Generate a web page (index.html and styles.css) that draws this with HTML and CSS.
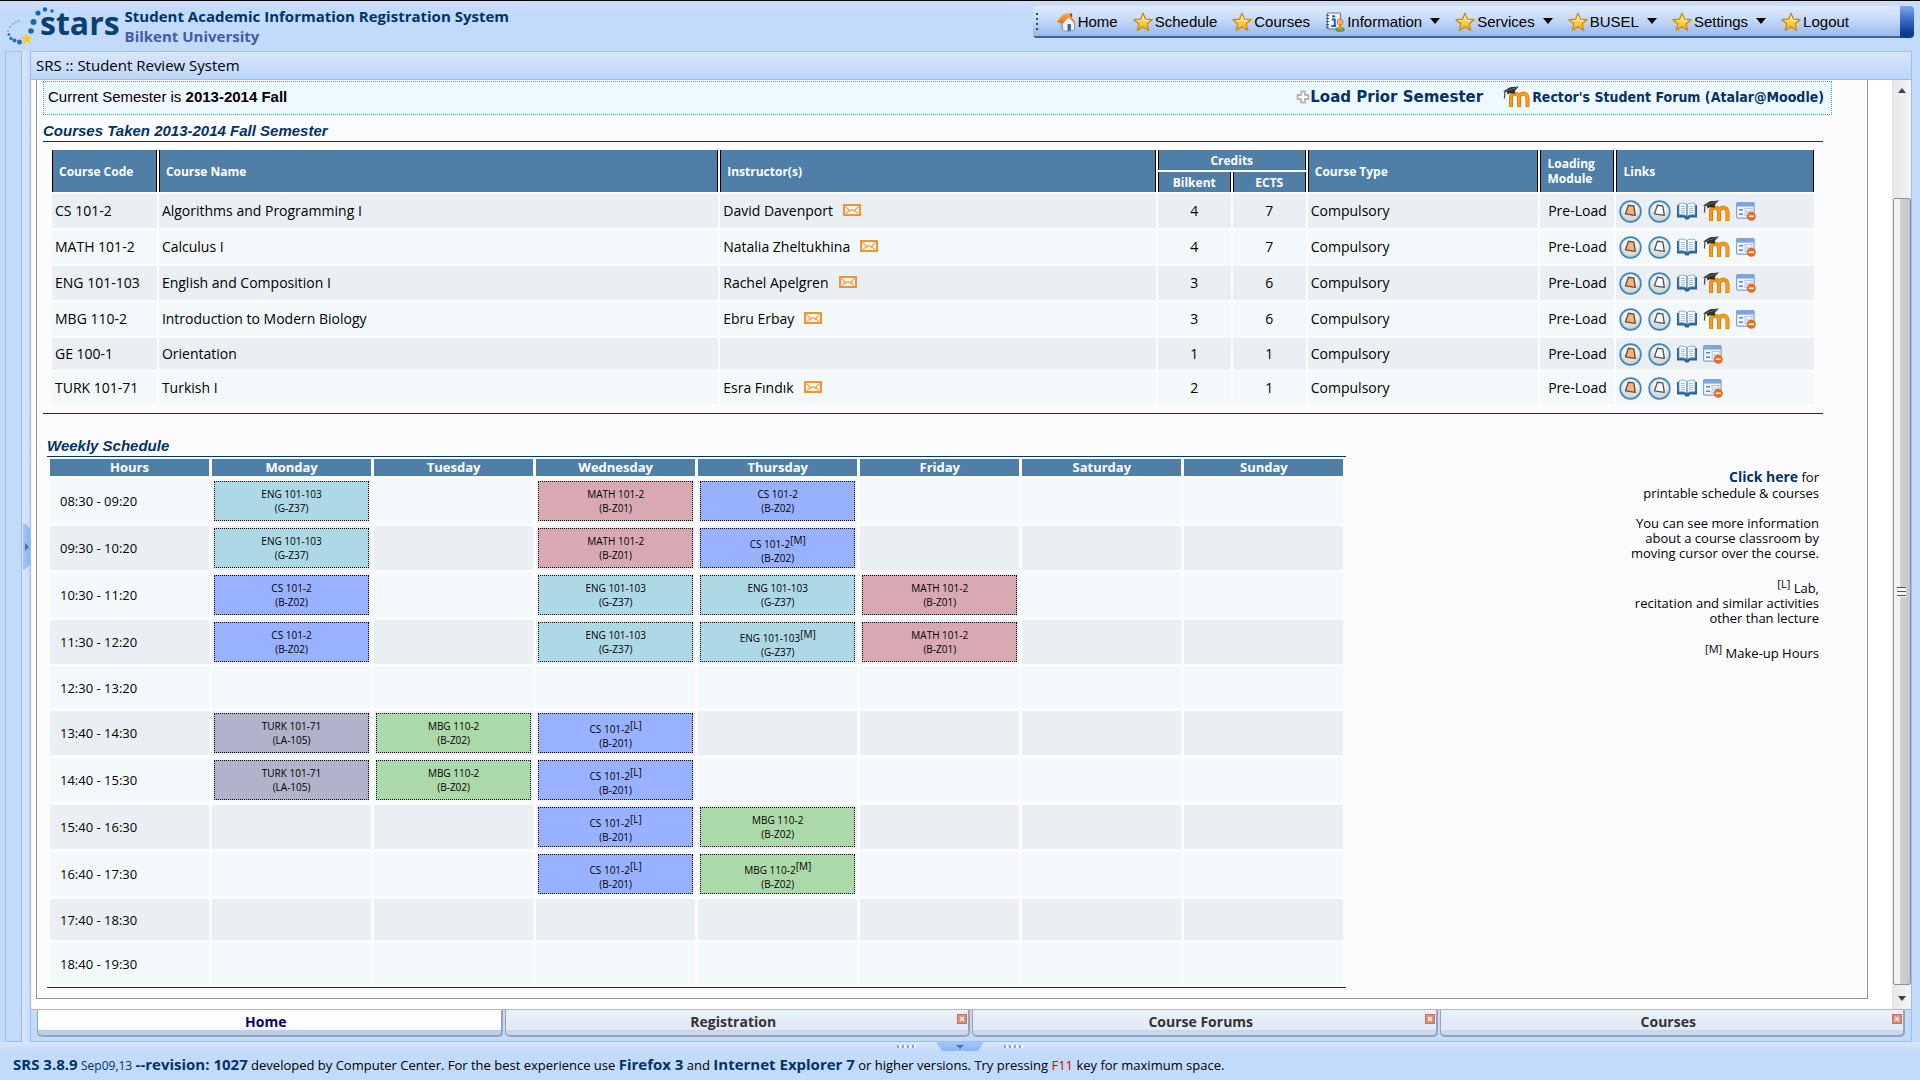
FILE: index.html
```
<!DOCTYPE html>
<html lang="en">
<head>
<meta charset="utf-8">
<meta name="viewport" content="width=device-width, initial-scale=1">
<title>SRS :: Student Review System</title>
<link rel="stylesheet" href="styles.css">
</head>
<body>
<svg class="sprite" aria-hidden="true">
  <defs>
    <linearGradient id="gold" x1="0" y1="0" x2="0" y2="1"><stop offset="0" stop-color="#fff27a"/><stop offset="1" stop-color="#f6b21b"/></linearGradient>
    <linearGradient id="disc" x1="0" y1="0" x2="0" y2="1"><stop offset="0" stop-color="#ffffff"/><stop offset="1" stop-color="#cfd3d6"/></linearGradient>
    <linearGradient id="roof" x1="0" y1="0" x2="0" y2="1"><stop offset="0" stop-color="#ffb040"/><stop offset="1" stop-color="#ee6a12"/></linearGradient>
  </defs>
  <symbol id="i-star" viewBox="0 0 20 20"><path d="M10 1.2l2.500 6 6.600.5-5 4.200 1.600 6.400L10 14.900l-5.700 3.400L5.900 11.900l-5-4.200 6.600-.5z" fill="url(#gold)" stroke="#c98a12" stroke-width="1.300" stroke-linejoin="round"/><path d="M10 4.500l1.400 3.900 3.600.4" fill="none" stroke="#fffbd0" stroke-width="1"/></symbol>
  <symbol id="i-home" viewBox="0 0 20 20"><path d="M13.500 1.500h2.600v4h-2.600z" fill="#a33a18"/><path d="M3 10l3-5 4 4v10l-6-3z" fill="#a9bcd9"/><path d="M6.500 10.500L12.500 4.500l6 6V18l-8 1.500-4-1.500z" fill="#f1f5fc" stroke="#7f96be" stroke-width="1"/><path d="M11.500 12h3.500v6.600l-3.500.6z" fill="#4468a8"/><path d="M7 2.200L12.500 1l6.900 9.300-1.400.7-5.600-6-5.400 6.600L.6 10z" fill="url(#roof)"/></symbol>
  <symbol id="i-info" viewBox="0 0 20 20"><rect x="2.500" y="1" width="13" height="16" rx="1" fill="#f4f7fc" stroke="#66789a" stroke-width="1.200"/><path d="M1 3.500h3M1 6.500h3M1 9.500h3M1 12.500h3M1 15.300h3" stroke="#47566f" stroke-width="1"/><circle cx="8.700" cy="4.300" r="1.400" fill="#1c62c0"/><path d="M6.800 7.500h3v6M6.300 14h5" fill="none" stroke="#1c62c0" stroke-width="2"/><ellipse cx="15" cy="17.500" rx="4.800" ry="2.500" fill="#46a83c"/><path d="M15 10.500l-2.600 7h5.200z" fill="#f08a26"/><circle cx="15" cy="10" r="3" fill="#f2b168" stroke="#c8741c" stroke-width=".8"/></symbol>
  <symbol id="i-bell" viewBox="0 0 24 24"><circle cx="12" cy="12" r="10.800" fill="url(#disc)" stroke="#3e86b0" stroke-width="1.700"/><circle cx="12" cy="12" r="9.500" fill="none" stroke="#a8c9dc" stroke-width=".8"/><path d="M9.800 5.500l5.600.7 1.600 9.800-10.200-1.600z" fill="#f3b577" stroke="#6b4a35" stroke-width="1.400" stroke-linejoin="round"/></symbol>
  <symbol id="i-bell-off" viewBox="0 0 24 24"><circle cx="12" cy="12" r="10.800" fill="url(#disc)" stroke="#3e86b0" stroke-width="1.700"/><circle cx="12" cy="12" r="9.500" fill="none" stroke="#a8c9dc" stroke-width=".8"/><path d="M9.800 5.500l5.600.7 1.600 9.800-10.200-1.600z" fill="#fdfdfd" stroke="#51565c" stroke-width="1.400" stroke-linejoin="round"/></symbol>
  <symbol id="i-book" viewBox="0 0 20 18"><path d="M0 3h20v12.500h-7l-1.500 2h-3l-1.500-2H0z" fill="#2c6496"/><path d="M2 1.500c3-.8 6-.4 8 1 2-1.400 5-1.800 8-1v11.500c-3-.5-6-.2-8 1.200-2-1.400-5-1.700-8-1.200z" fill="#f5fafe" stroke="#6d9cc4" stroke-width=".8"/><path d="M10 2.500v11.500" stroke="#4a7fb0" stroke-width="1.200"/><path d="M4 4.500h4M4 6.500h4M4 8.500h4M4 10.500h4M12 4.500h4M12 6.500h4M12 8.500h4M12 10.500h4" stroke="#a9bfd2" stroke-width="1"/></symbol>
  <symbol id="i-moodle" viewBox="0 0 27 22"><path d="M8 21V9M8 12c0-6 8-6 8 0v9M16 12c0-6 8.500-6 8.500 0v9" fill="none" stroke="#c77708" stroke-width="4"/><path d="M8 20.500V9M8 12c0-6 8-6 8 0v8.500M16 12c0-6 8.500-6 8.500 0v8.500" fill="none" stroke="#f89a1c" stroke-width="2.800"/><path d="M0 5.500L7 1.200 16 .4 12 4.500 11.500 8.500C9.500 6.500 6.500 7 4.500 8.500L4 6z" fill="#2e2e2e"/><path d="M2 5.500l-.6 7" stroke="#444" stroke-width="1.200"/><path d="M3 5l11-3.500" stroke="#888" stroke-width=".7"/></symbol>
  <symbol id="i-form" viewBox="0 0 20 19"><rect x=".6" y=".6" width="17.500" height="15.500" rx="1" fill="#f3f7fd" stroke="#7fa3dc" stroke-width="1.200"/><path d="M.6.600h17.500v4H.6z" fill="#7ea4e0"/><path d="M3 7.800h4M3 12.300h4" stroke="#5b84c8" stroke-width="1.600"/><rect x="9" y="6.500" width="7" height="2.600" fill="#fff" stroke="#9db6dc" stroke-width=".8"/><rect x="9" y="11" width="6" height="2.600" fill="#fff" stroke="#9db6dc" stroke-width=".8"/><circle cx="15.300" cy="14.300" r="4.500" fill="#ea6a1e"/><path d="M12.800 14.300h5" stroke="#fff" stroke-width="1.600"/></symbol>
  <symbol id="i-mail" viewBox="0 0 18 12"><rect x="1" y="1" width="16" height="10" fill="#fff6ea" stroke="#ee8a26" stroke-width="1.800"/><path d="M2.500 2.500L7 7l2-1.500L11 7l4.500-4.500M3 9.500L7 6M15 9.500L11 6" fill="none" stroke="#e6a062" stroke-width="1.100"/></symbol>
  <symbol id="i-plus" viewBox="0 0 14 14"><path d="M5 1.500h4V5h3.500v4H9v3.500H5V9H1.500V5H5z" fill="#fff" stroke="#b5b5b5" stroke-width="1.800" stroke-linejoin="round"/></symbol>
  <symbol id="i-close" viewBox="0 0 10 10"><rect x=".5" y=".5" width="9" height="9" fill="#e08a78" stroke="#c9705f"/><path d="M3 3l4 4M7 3L3 7" stroke="#fff" stroke-width="1.300"/></symbol>
</svg>

<header class="top">
  <div class="brand">
    <svg class="brand-dots" viewBox="0 0 54 42" aria-hidden="true">
      <g fill="#7aa6d3"><circle cx="2" cy="29" r="1"/><circle cx="2" cy="25" r="1"/><circle cx="4" cy="21" r="1"/><circle cx="7" cy="18" r="1"/><circle cx="10" cy="16" r="1"/><circle cx="13" cy="15" r="1"/></g>
      <g fill="#2b6db0"><circle cx="3" cy="28.500" r="1.200"/><circle cx="5" cy="32.500" r="1.700"/><circle cx="8.500" cy="34.500" r="2"/><circle cx="13.500" cy="36" r="2.500"/></g>
      <g fill="#1b69ac"><circle cx="25" cy="25" r="2.800"/><circle cx="27.500" cy="16" r="3"/><circle cx="32" cy="7" r="2.600"/><circle cx="39" cy="3.500" r="2.300"/><circle cx="46" cy="5" r="1.700"/></g>
      <path d="M20.500 27l1.800 3.700 4.200.2-3.200 2.800 1.400 4-3.900-1.900-3.600 2.400.8-4.300-3.200-2.700 4.200-.6z" fill="#fcc917"/>
    </svg>
    <span class="brand-word">stars</span>
    <div class="brand-text">
      <p class="brand-name">Student Academic Information Registration System</p>
      <p class="brand-school">Bilkent University</p>
    </div>
  </div>
  <nav class="menu">
    <a class="menu-item" href="#"><svg><use href="#i-home"/></svg>Home</a>
    <a class="menu-item" href="#"><svg><use href="#i-star"/></svg>Schedule</a>
    <a class="menu-item" href="#"><svg><use href="#i-star"/></svg>Courses</a>
    <button class="menu-item menu-drop" type="button"><svg><use href="#i-info"/></svg>Information</button>
    <button class="menu-item menu-drop" type="button"><svg><use href="#i-star"/></svg>Services</button>
    <button class="menu-item menu-drop" type="button"><svg><use href="#i-star"/></svg>BUSEL</button>
    <button class="menu-item menu-drop" type="button"><svg><use href="#i-star"/></svg>Settings</button>
    <a class="menu-item" href="#"><svg><use href="#i-star"/></svg>Logout</a>
  </nav>
</header>

<div class="frame">
  <div class="rail"></div>
  <div class="splitter"><button class="rail-handle" type="button" aria-label="Expand side panel"></button></div>
  <main class="panel">
    <h1 class="panel-title">SRS :: Student Review System</h1>
    <div class="panel-body">
      <div class="sheet">
        <div class="notice">
          <p>Current Semester is <b>2013-2014 Fall</b></p>
          <a class="notice-prior" href="#"><svg><use href="#i-plus"/></svg>Load Prior Semester</a>
          <a class="notice-forum" href="#"><svg><use href="#i-moodle"/></svg>Rector's Student Forum (Atalar@Moodle)</a>
        </div>

        <section class="courses">
          <h2 class="heading">Courses Taken 2013-2014 Fall Semester</h2>
          <table class="course-table">
            <colgroup><col class="c-code"><col class="c-name"><col class="c-inst"><col class="c-credit"><col class="c-credit"><col class="c-type"><col class="c-load"><col class="c-links"></colgroup>
            <thead>
              <tr><th rowspan="2">Course Code</th><th rowspan="2">Course Name</th><th rowspan="2">Instructor(s)</th><th class="mid" colspan="2">Credits</th><th rowspan="2">Course Type</th><th rowspan="2">Loading Module</th><th rowspan="2">Links</th></tr>
              <tr><th class="mid">Bilkent</th><th class="mid">ECTS</th></tr>
            </thead>
            <tbody>
              <tr><td>CS 101-2</td><td>Algorithms and Programming I</td><td>David Davenport<a class="mail" href="#" aria-label="Mail"><svg><use href="#i-mail"/></svg></a></td><td class="mid">4</td><td class="mid">7</td><td>Compulsory</td><td class="mid">Pre-Load</td><td><div class="links"><a href="#" aria-label="Grades"><svg class="round"><use href="#i-bell"/></svg></a><a href="#" aria-label="Attendance"><svg class="round"><use href="#i-bell-off"/></svg></a><a href="#" aria-label="Syllabus"><svg class="book"><use href="#i-book"/></svg></a><a href="#" aria-label="Moodle"><svg class="moodle"><use href="#i-moodle"/></svg></a><a href="#" aria-label="Withdraw"><svg class="form"><use href="#i-form"/></svg></a></div></td></tr>
              <tr><td>MATH 101-2</td><td>Calculus I</td><td>Natalia Zheltukhina<a class="mail" href="#" aria-label="Mail"><svg><use href="#i-mail"/></svg></a></td><td class="mid">4</td><td class="mid">7</td><td>Compulsory</td><td class="mid">Pre-Load</td><td><div class="links"><a href="#" aria-label="Grades"><svg class="round"><use href="#i-bell"/></svg></a><a href="#" aria-label="Attendance"><svg class="round"><use href="#i-bell-off"/></svg></a><a href="#" aria-label="Syllabus"><svg class="book"><use href="#i-book"/></svg></a><a href="#" aria-label="Moodle"><svg class="moodle"><use href="#i-moodle"/></svg></a><a href="#" aria-label="Withdraw"><svg class="form"><use href="#i-form"/></svg></a></div></td></tr>
              <tr><td>ENG 101-103</td><td>English and Composition I</td><td>Rachel Apelgren<a class="mail" href="#" aria-label="Mail"><svg><use href="#i-mail"/></svg></a></td><td class="mid">3</td><td class="mid">6</td><td>Compulsory</td><td class="mid">Pre-Load</td><td><div class="links"><a href="#" aria-label="Grades"><svg class="round"><use href="#i-bell"/></svg></a><a href="#" aria-label="Attendance"><svg class="round"><use href="#i-bell-off"/></svg></a><a href="#" aria-label="Syllabus"><svg class="book"><use href="#i-book"/></svg></a><a href="#" aria-label="Moodle"><svg class="moodle"><use href="#i-moodle"/></svg></a><a href="#" aria-label="Withdraw"><svg class="form"><use href="#i-form"/></svg></a></div></td></tr>
              <tr><td>MBG 110-2</td><td>Introduction to Modern Biology</td><td>Ebru Erbay<a class="mail" href="#" aria-label="Mail"><svg><use href="#i-mail"/></svg></a></td><td class="mid">3</td><td class="mid">6</td><td>Compulsory</td><td class="mid">Pre-Load</td><td><div class="links"><a href="#" aria-label="Grades"><svg class="round"><use href="#i-bell"/></svg></a><a href="#" aria-label="Attendance"><svg class="round"><use href="#i-bell-off"/></svg></a><a href="#" aria-label="Syllabus"><svg class="book"><use href="#i-book"/></svg></a><a href="#" aria-label="Moodle"><svg class="moodle"><use href="#i-moodle"/></svg></a><a href="#" aria-label="Withdraw"><svg class="form"><use href="#i-form"/></svg></a></div></td></tr>
              <tr class="short"><td>GE 100-1</td><td>Orientation</td><td></td><td class="mid">1</td><td class="mid">1</td><td>Compulsory</td><td class="mid">Pre-Load</td><td><div class="links"><a href="#" aria-label="Grades"><svg class="round"><use href="#i-bell"/></svg></a><a href="#" aria-label="Attendance"><svg class="round"><use href="#i-bell-off"/></svg></a><a href="#" aria-label="Syllabus"><svg class="book"><use href="#i-book"/></svg></a><a href="#" aria-label="Withdraw"><svg class="form"><use href="#i-form"/></svg></a></div></td></tr>
              <tr class="short"><td>TURK 101-71</td><td>Turkish I</td><td>Esra Fındık<a class="mail" href="#" aria-label="Mail"><svg><use href="#i-mail"/></svg></a></td><td class="mid">2</td><td class="mid">1</td><td>Compulsory</td><td class="mid">Pre-Load</td><td><div class="links"><a href="#" aria-label="Grades"><svg class="round"><use href="#i-bell"/></svg></a><a href="#" aria-label="Attendance"><svg class="round"><use href="#i-bell-off"/></svg></a><a href="#" aria-label="Syllabus"><svg class="book"><use href="#i-book"/></svg></a><a href="#" aria-label="Withdraw"><svg class="form"><use href="#i-form"/></svg></a></div></td></tr>
            </tbody>
          </table>
        </section>

        <div class="lower">
          <section class="schedule">
            <h2 class="heading">Weekly Schedule</h2>
            <table class="week">
              <thead>
                <tr><th>Hours</th><th>Monday</th><th>Tuesday</th><th>Wednesday</th><th>Thursday</th><th>Friday</th><th>Saturday</th><th>Sunday</th></tr>
              </thead>
              <tbody>
                <tr><th scope="row">08:30 - 09:20</th><td><div class="slot eng">ENG 101-103<br>(G-Z37)</div></td><td></td><td><div class="slot math">MATH 101-2<br>(B-Z01)</div></td><td><div class="slot cs">CS 101-2<br>(B-Z02)</div></td><td></td><td></td><td></td></tr>
                <tr><th scope="row">09:30 - 10:20</th><td><div class="slot eng">ENG 101-103<br>(G-Z37)</div></td><td></td><td><div class="slot math">MATH 101-2<br>(B-Z01)</div></td><td><div class="slot cs">CS 101-2<sup>[M]</sup><br>(B-Z02)</div></td><td></td><td></td><td></td></tr>
                <tr><th scope="row">10:30 - 11:20</th><td><div class="slot cs">CS 101-2<br>(B-Z02)</div></td><td></td><td><div class="slot eng">ENG 101-103<br>(G-Z37)</div></td><td><div class="slot eng">ENG 101-103<br>(G-Z37)</div></td><td><div class="slot math">MATH 101-2<br>(B-Z01)</div></td><td></td><td></td></tr>
                <tr><th scope="row">11:30 - 12:20</th><td><div class="slot cs">CS 101-2<br>(B-Z02)</div></td><td></td><td><div class="slot eng">ENG 101-103<br>(G-Z37)</div></td><td><div class="slot eng">ENG 101-103<sup>[M]</sup><br>(G-Z37)</div></td><td><div class="slot math">MATH 101-2<br>(B-Z01)</div></td><td></td><td></td></tr>
                <tr><th scope="row">12:30 - 13:20</th><td></td><td></td><td></td><td></td><td></td><td></td><td></td></tr>
                <tr><th scope="row">13:40 - 14:30</th><td><div class="slot turk">TURK 101-71<br>(LA-105)</div></td><td><div class="slot mbg">MBG 110-2<br>(B-Z02)</div></td><td><div class="slot cs">CS 101-2<sup>[L]</sup><br>(B-201)</div></td><td></td><td></td><td></td><td></td></tr>
                <tr><th scope="row">14:40 - 15:30</th><td><div class="slot turk">TURK 101-71<br>(LA-105)</div></td><td><div class="slot mbg">MBG 110-2<br>(B-Z02)</div></td><td><div class="slot cs">CS 101-2<sup>[L]</sup><br>(B-201)</div></td><td></td><td></td><td></td><td></td></tr>
                <tr><th scope="row">15:40 - 16:30</th><td></td><td></td><td><div class="slot cs">CS 101-2<sup>[L]</sup><br>(B-201)</div></td><td><div class="slot mbg">MBG 110-2<br>(B-Z02)</div></td><td></td><td></td><td></td></tr>
                <tr><th scope="row">16:40 - 17:30</th><td></td><td></td><td><div class="slot cs">CS 101-2<sup>[L]</sup><br>(B-201)</div></td><td><div class="slot mbg">MBG 110-2<sup>[M]</sup><br>(B-Z02)</div></td><td></td><td></td><td></td></tr>
                <tr><th scope="row">17:40 - 18:30</th><td></td><td></td><td></td><td></td><td></td><td></td><td></td></tr>
                <tr><th scope="row">18:40 - 19:30</th><td></td><td></td><td></td><td></td><td></td><td></td><td></td></tr>
              </tbody>
            </table>
          </section>
          <aside class="hints">
            <p><a href="#">Click here</a> for<br>printable schedule &amp; courses</p>
            <p>You can see more information<br>about a course classroom by<br>moving cursor over the course.</p>
            <p><sup>[L]</sup> Lab,<br>recitation and similar activities<br>other than lecture</p>
            <p><sup>[M]</sup> Make-up Hours</p>
          </aside>
        </div>
      </div>
      <div class="scrollbar" aria-hidden="true"><span class="arrow up"></span><span class="thumb"></span><span class="arrow down"></span></div>
    </div>
    <div class="tabs">
      <div class="tab active"><button type="button">Home</button></div>
      <div class="tab"><button type="button">Registration</button><button class="tab-close" type="button" aria-label="Close Registration"><svg><use href="#i-close"/></svg></button></div>
      <div class="tab"><button type="button">Course Forums</button><button class="tab-close" type="button" aria-label="Close Course Forums"><svg><use href="#i-close"/></svg></button></div>
      <div class="tab"><button type="button">Courses</button><button class="tab-close" type="button" aria-label="Close Courses"><svg><use href="#i-close"/></svg></button></div>
    </div>
  </main>
</div>

<footer class="foot">
  <div class="foot-split"><span class="dots"></span><button type="button" aria-label="Collapse footer"></button><span class="dots"></span></div>
  <p><b>SRS 3.8.9</b> <span class="date">Sep09,13</span> <b>--revision: 1027</b> developed by Computer Center. For the best experience use <b>Firefox 3</b> and <b>Internet Explorer 7</b> or higher versions. Try pressing <span class="key">F11</span> key for maximum space.</p>
</footer>
</body>
</html>
```
FILE: styles.css
```
* { box-sizing: border-box; }

:root {
  --navy: #003366;
  --blue: #c3dbfb;
  --line: #99bbff;
  --head: #4f7ea7;
}

body {
  margin: 0;
  min-height: 100vh;
  display: flex;
  flex-direction: column;
  background: var(--blue);
  color: #000;
  font: 14px/18px "Open Sans", "Noto Sans", sans-serif;
}

p, h1, h2 { margin: 0; }
a { color: inherit; text-decoration: none; }
svg { display: block; flex: none; }
button { border: 0; padding: 0; background: none; color: inherit; font: inherit; }
sup { font-size: inherit; line-height: 12px; }
.sprite { position: absolute; width: 0; height: 0; }

/* Top bar */
.top {
  display: flex;
  justify-content: space-between;
  align-items: flex-start;
  border-top: 1px solid #000;
  height: 51px;
  padding: 5px 6px;
  background: linear-gradient(#cddcf9, var(--blue) 12px);
}
.brand { display: flex; align-items: flex-start; }
.brand-dots { width: 54px; height: 42px; margin-right: -20px; }
.brand-word { color: #0a4070; font: bold 32px/34px "Open Sans", sans-serif; }
.brand-text { margin-left: 5px; font-weight: bold; font-size: 15px; line-height: 20px; color: var(--navy); }
.brand-school { color: #4459a8; }

.menu {
  display: flex;
  align-items: center;
  gap: 15px;
  height: 32px;
  padding: 0 65px 0 3px;
  border-radius: 4px;
  background:
    linear-gradient(#7ba7ee, #3d6fc4 40%, #0c3b92 85%) right / 14px 100% no-repeat,
    linear-gradient(#dfebfe, #c4d9f9 45%, #98b9ea 30px, #40639e 30px);
  font: 15px/20px "Liberation Sans", Arial, sans-serif;
  white-space: nowrap;
}
.menu::before {
  content: "";
  width: 2px;
  height: 18px;
  margin-right: 3px;
  background: repeating-linear-gradient(#2b4674 0 2px, transparent 2px 5px);
}
.menu-item { display: flex; align-items: center; gap: 2px; }
.menu-item svg { width: 20px; height: 20px; }
.menu-drop::after {
  content: "";
  margin: 0 0 3px 6px;
  border: 5px solid transparent;
  border-top: 6px solid #000;
  border-bottom: 0;
}

/* Frame */
.frame { flex: 1; display: flex; padding: 0 8px 0 5px; }
.rail { width: 17px; border: 1px solid var(--line); }
.splitter {
  width: 8px;
  display: flex;
  align-items: center;
  justify-content: flex-end;
  background: linear-gradient(90deg, #dce8fb, #c6dafa);
}
.rail-handle {
  width: 7px;
  height: 48px;
  background: linear-gradient(90deg, #a4c3fa, #8db2f7);
  clip-path: polygon(0 0, 100% 12%, 100% 88%, 0 100%);
  display: flex;
  align-items: center;
}
.rail-handle::before { content: ""; margin-left: 2px; border: 4px solid transparent; border-left: 4px solid #56719f; border-right: 0; }
.panel { flex: 1; min-width: 0; display: flex; flex-direction: column; border: 1px solid var(--line); background: #fff; }
.panel-title {
  height: 28px;
  padding: 0 5px;
  border-bottom: 1px solid var(--line);
  background: linear-gradient(#d9e6fc, #bfd6f8);
  font-size: 15px;
  font-weight: normal;
  line-height: 27px;
}
.panel-body { flex: 1; display: flex; padding-left: 5px; }
.sheet {
  flex: 1;
  min-width: 0;
  margin: 0 24px 10px 0;
  padding: 1px 35px 10px 6px;
  border: 1px solid #8c9599;
  border-top: 0;
  background: #fcfcfe;
}

.notice {
  display: flex;
  align-items: center;
  min-height: 34px;
  padding: 0 7px 2px 4px;
  border: 1px dotted #4fa0a8;
  background: #f0f8ff;
  font-family: "Liberation Sans", Arial, sans-serif;
  font-size: 15px;
}
.notice a { display: flex; align-items: center; color: var(--navy); font-weight: bold; }
.notice-prior { margin-left: auto; font-family: "DejaVu Sans", sans-serif; font-size: 15px; }
.notice-prior svg { width: 14px; height: 14px; }
.notice-forum { margin-left: 20px; font-family: "DejaVu Sans Condensed", sans-serif; font-size: 14px; }
.notice-forum svg { width: 27px; height: 22px; margin-right: 2px; }

.heading {
  height: 27px;
  padding-top: 7px;
  border-bottom: 1px solid var(--navy);
  color: var(--navy);
  font: italic bold 15px/18px "Liberation Sans", Arial, sans-serif;
}

/* Courses */
.courses { margin-right: 9px; border-bottom: 1px solid var(--navy); padding-bottom: 7px; }
.courses .heading { margin-bottom: 6px; }
.course-table { width: calc(100% - 14px); margin: 0 7px; table-layout: fixed; border-spacing: 2px; }
.c-code { width: 6%; }
.c-name { width: 32%; }
.c-credit { width: 73px; }
.c-type { width: 13.2%; }
.c-load { width: 74px; }
.c-links { width: 11.3%; }
.course-table th {
  height: 20px;
  padding: 0 6px;
  border: 1px solid #000;
  border-width: 0 1px;
  background: var(--head);
  color: #fff;
  font-size: 12px;
  line-height: 15px;
  text-align: left;
}
.course-table td { height: 34px; padding: 0 3px; background: #f3f9fb; }
.course-table tr:nth-child(odd) td { background: #eaeff3; }
.course-table .short td { height: 32px; }
.course-table .mid { text-align: center; padding: 0; }
.mail { display: inline-block; margin-left: 10px; }
.mail svg { width: 18px; height: 12px; }
.links { display: flex; align-items: center; gap: 6px; }
.round { width: 23px; height: 23px; }
.book { width: 20px; height: 18px; }
.moodle { width: 27px; height: 22px; }
.form { width: 20px; height: 19px; }

/* Schedule */
.lower { display: flex; margin: 16px 9px 0 4px; }
.schedule { flex: 11; border-bottom: 1px solid var(--navy); }
.week { width: 100%; margin-top: -1px; table-layout: fixed; border-spacing: 3px; }
.week thead th { height: 17px; padding: 0; background: var(--head); color: #fff; font-size: 13px; line-height: 17px; }
.week tbody th { padding: 0 0 0 10px; text-align: left; font-weight: normal; font-size: 13px; }
.week td, .week tbody th { height: 41px; background: #eaeff3; }
.week td { padding: 2px; }
.week tr:nth-child(odd) > td, .week tbody tr:nth-child(odd) > th { background: #f3f9fb; }
.slot {
  min-height: 40px;
  padding-top: 5px;
  border: 1px dotted #000;
  text-align: center;
  font-size: 10px;
  line-height: 14px;
}
.eng { background: #add8e6; }
.math { background: #d8a9b3; }
.cs { background: #99b2ff; }
.mbg { background: #acd9a9; }
.turk { background: #b0b3c9; }

.hints { flex: 4; padding: 38px 4px 0 0; text-align: right; font-size: 13px; line-height: 15px; }
.hints p { margin-bottom: 15px; }
.hints a { color: var(--navy); font-size: 14px; line-height: 18px; font-weight: bold; }
.hints sup { font-size: 11px; line-height: 15px; }

/* Scrollbar */
.scrollbar {
  width: 19px;
  display: flex;
  flex-direction: column;
  align-items: center;
  padding: 8px 0;
  background: linear-gradient(90deg, #e6e6e8, #f4f4f5);
}
.arrow { border: 4px solid transparent; }
.up { border-top: 0; border-bottom: 5px solid #404040; }
.down { border-bottom: 0; border-top: 5px solid #404040; }
.thumb {
  flex: 1;
  width: 18px;
  margin: 105px 0 11px;
  border: 1px solid #8f8f96;
  border-radius: 2px;
  background:
    repeating-linear-gradient(#555 0 1px, #f4f4f4 1px 4px) center / 9px 10px no-repeat,
    linear-gradient(90deg, #f4f4f5 35%, #d2d2d6 38%, #c4c4c9);
}

/* Tabs */
.tabs { display: flex; gap: 2px; padding: 0 6px 4px; border-top: 1px solid var(--line); background: var(--blue); }
.tab {
  flex: 1;
  position: relative;
  border: 1px solid #98a2b8;
  border-width: 0 2px 2px 1px;
  border-radius: 0 0 5px 5px;
  background: linear-gradient(#e9f0fc, #e2e9f6 20px, #cad6ec 20px);
  color: #333;
}
.tab > button:first-child { width: 100%; height: 25px; padding: 0 7px 2px 0; font-weight: bold; }
.tab.active { background: linear-gradient(#fff 18px, #eef7fe 18px, #eef7fe 20px, #bccfe9 20px); color: #000066; }
.tab .tab-close { position: absolute; top: 4px; right: 1px; }
.tab-close svg { width: 10px; height: 10px; }

/* Footer */
.foot { min-height: 39px; background: linear-gradient(#d8e7fd, var(--blue) 10px); font-size: 13px; }
.foot-split { display: flex; justify-content: center; gap: 20px; height: 9px; }
.foot-split button { width: 48px; height: 9px; background: linear-gradient(#a9c6fa, #8fb3f7); clip-path: polygon(0 0, 100% 0, 88% 100%, 12% 100%); }
.foot-split button::before { content: ""; display: block; width: 0; margin: 0 auto; border: 4px solid transparent; border-top: 4px solid #56719f; border-bottom: 0; }
.dots { width: 19px; margin-top: 3px; height: 3px; background: repeating-linear-gradient(90deg, #7fa5e4 0 2px, #fff 2px 4px, transparent 4px 5px); }
.foot p { padding: 4px 13px; }
.foot b { color: var(--navy); font-size: 15px; }
.date { color: var(--navy); font-size: 12px; }
.key { color: #d40000; }
```
